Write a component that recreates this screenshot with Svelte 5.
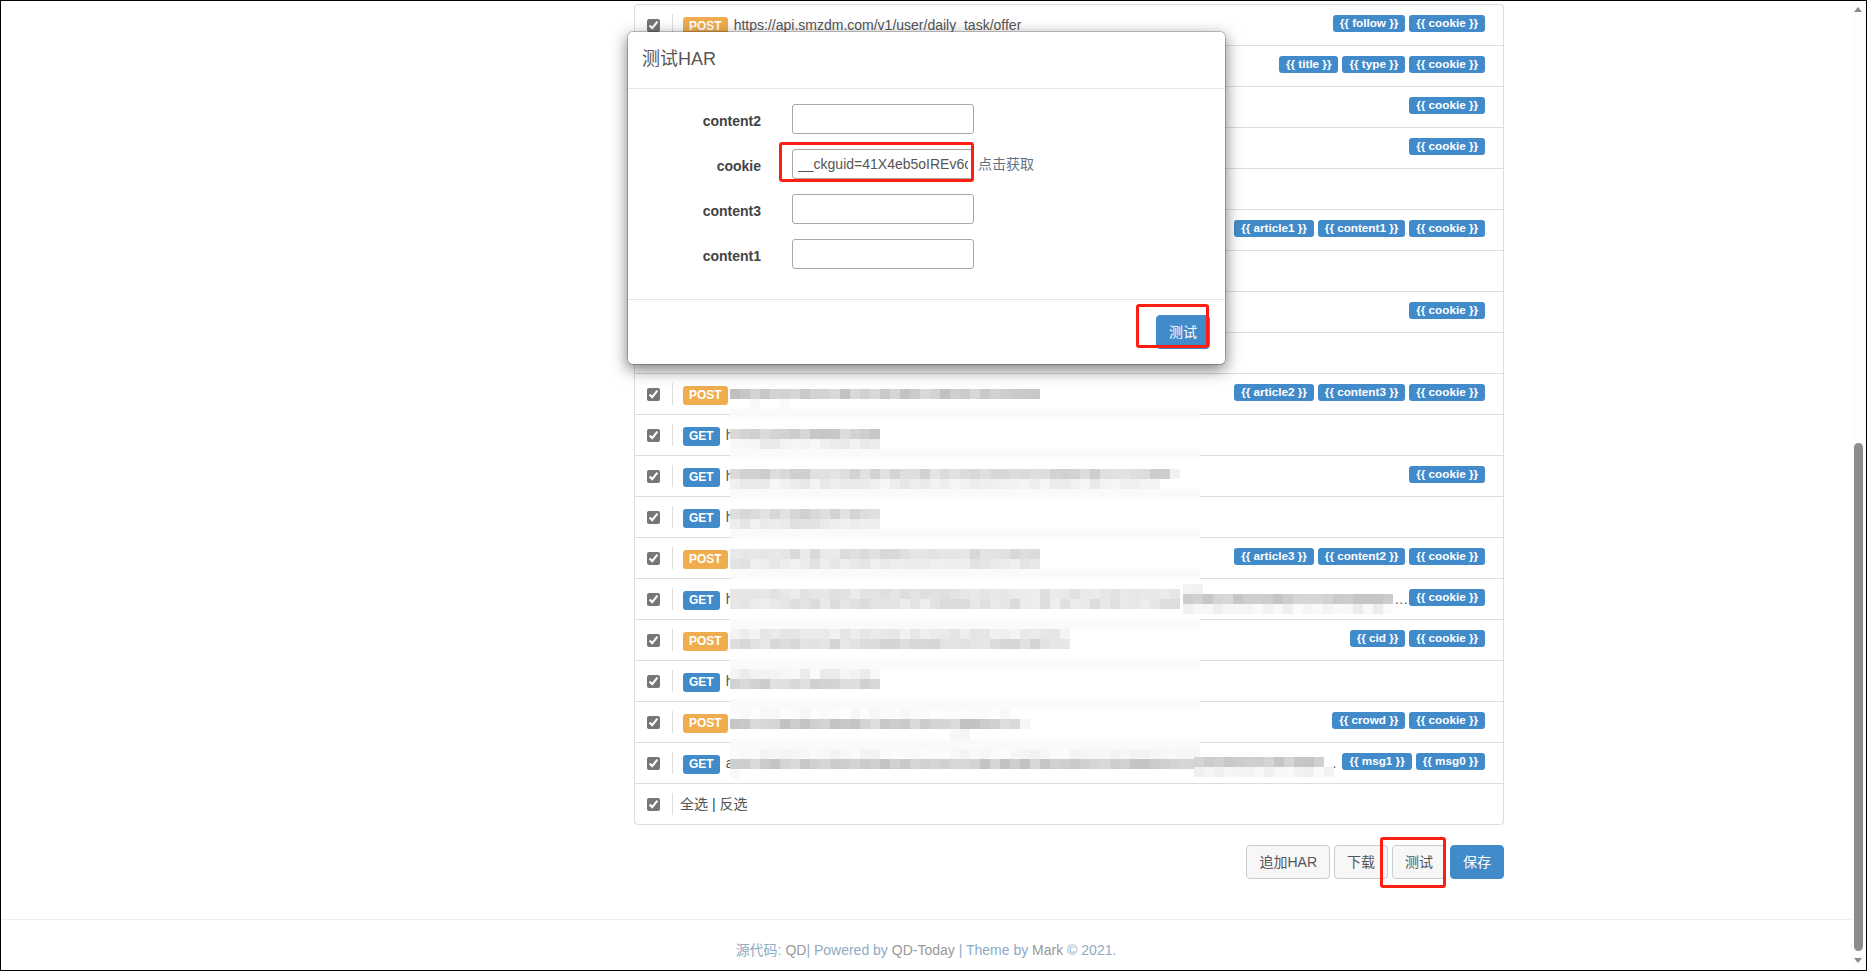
<script>
  const rows = [
    { method: 'POST', url: 'https://api.smzdm.com/v1/user/daily_task/offer', tags: ['follow', 'cookie'] },
    { method: 'POST', url: '', tags: ['title', 'type', 'cookie'] },
    { method: 'GET', url: '', tags: ['cookie'] },
    { method: 'GET', url: '', tags: ['cookie'] },
    { method: 'GET', url: '', tags: [] },
    { method: 'POST', url: '', tags: ['article1', 'content1', 'cookie'] },
    { method: 'GET', url: '', tags: [] },
    { method: 'GET', url: '', tags: ['cookie'] },
    { method: 'GET', url: '', tags: [] },
    { method: 'POST', url: '', tags: ['article2', 'content3', 'cookie'] },
    { method: 'GET', url: 'h', tags: [] },
    { method: 'GET', url: 'h', tags: ['cookie'] },
    { method: 'GET', url: 'h', tags: [] },
    { method: 'POST', url: '', tags: ['article3', 'content2', 'cookie'] },
    { method: 'GET', url: 'h', trail: '…', tags: ['cookie'] },
    { method: 'POST', url: '', tags: ['cid', 'cookie'] },
    { method: 'GET', url: 'h', tags: [] },
    { method: 'POST', url: '', tags: ['crowd', 'cookie'] },
    { method: 'GET', url: 'a', trail: '.', tags: ['msg1', 'msg0'] }
  ];

  const fields = [
    { name: 'content2', value: '' },
    { name: 'cookie', value: '__ckguid=41X4eb5oIREv6c', fetch: true },
    { name: 'content3', value: '' },
    { name: 'content1', value: '' }
  ];

  // blurred out urls: [x, y, width, mean grey, spread]
  const strips = [
    [730, 389, 310, 205, 14],
    [750, 399, 10, 248, 2],
    [780, 399, 10, 248, 2],
    [730, 429, 150, 208, 12],
    [730, 439, 150, 241, 8],
    [730, 469, 440, 216, 12],
    [1170, 469, 10, 244, 2],
    [730, 479, 430, 238, 8],
    [730, 509, 150, 218, 10],
    [730, 519, 150, 232, 10],
    [730, 549, 310, 225, 10],
    [730, 559, 310, 233, 8],
    [730, 589, 450, 229, 8],
    [730, 599, 450, 228, 10],
    [1183, 584, 20, 242, 2],
    [1183, 594, 210, 206, 10],
    [1183, 604, 210, 244, 8],
    [730, 629, 340, 236, 8],
    [730, 639, 340, 222, 10],
    [730, 669, 150, 242, 8],
    [730, 679, 150, 214, 12],
    [730, 709, 280, 250, 4],
    [730, 719, 290, 208, 14],
    [1020, 719, 10, 246, 2],
    [950, 729, 20, 246, 2],
    [730, 749, 470, 247, 5],
    [730, 759, 470, 206, 12],
    [730, 769, 10, 248, 2],
    [1194, 757, 130, 204, 10],
    [1194, 767, 136, 245, 5]
  ];

  const bands = [409, 449, 489, 529, 569, 619, 659, 699, 739];

  let seed = 7;
  function rand() {
    seed = (seed * 16807) % 2147483647;
    return seed / 2147483647;
  }

  const tiles = [];
  for (const [x, y, width, mean, spread] of strips) {
    for (let i = 0; i < width; i += 10) {
      const g = Math.min(255, Math.round(mean + (rand() - 0.5) * 2 * spread));
      const tint = Math.round((rand() - 0.5) * 5);
      tiles.push({ x: x + i, y, fill: `rgb(${g + tint},${g},${g - tint})` });
    }
  }
</script>

<div class="page">
  <div class="main">
    <div class="content">
      <div class="list">
        {#each rows as row}
          <div class="row">
            <input type="checkbox" checked />
            <span class="divider"></span>
            <span class="method {row.method.toLowerCase()}">{row.method}</span>
            <span class="url">{row.url}</span>
            {#if row.trail}
              <span class="trail" class:dot={row.trail === '.'}>{row.trail}</span>
            {/if}
            {#if row.tags.length}
              <div class="tags">
                {#each row.tags as tag}
                  <span class="tag">{`{{ ${tag} }}`}</span>
                {/each}
              </div>
            {/if}
          </div>
        {/each}
        <div class="row last">
          <input type="checkbox" checked />
          <span class="divider"></span>
          <span class="select-links">全选 <b>|</b> 反选</span>
        </div>
      </div>

      <div class="actions">
        <button class="btn">追加HAR</button>
        <button class="btn">下载</button>
        <button class="btn">测试</button>
        <button class="btn primary">保存</button>
      </div>
    </div>

    <footer>
      <span class="blue">源代码:</span> QD<span class="blue">| Powered by</span> QD-Today <span class="blue">| Theme by</span> Mark <span class="blue">© 2021.</span>
    </footer>
  </div>

  <div class="scrollbar">
    <span class="arrow up"></span>
    <span class="thumb"></span>
    <span class="arrow down"></span>
  </div>

  <svg class="mosaic" width="1867" height="971" aria-hidden="true">
    {#each bands as y}
      <rect x="730" {y} width="470" height="10" fill="#fafafa" />
    {/each}
    {#each tiles as t}
      <rect x={t.x} y={t.y} width="10" height="10" fill={t.fill} />
    {/each}
  </svg>

  <div class="modal">
    <div class="modal-head">测试HAR</div>
    <div class="modal-body">
      {#each fields as field}
        <div class="field">
          <label for={field.name}>{field.name}</label>
          <input id={field.name} type="text" value={field.value} />
          {#if field.fetch}
            <span class="fetch">点击获取</span>
          {/if}
        </div>
      {/each}
    </div>
    <div class="modal-foot">
      <button class="btn primary">测试</button>
    </div>
  </div>

  <span class="mark mark-input"></span>
  <span class="mark mark-run"></span>
  <span class="mark mark-test"></span>
</div>

<style>
  :global(body) {
    margin: 0;
    background: #fff;
  }
  .page {
    position: relative;
    display: flex;
    box-sizing: border-box;
    height: 971px;
    overflow: hidden;
    border: 1px solid #000;
    font-family: "Liberation Sans", "Noto Sans CJK SC", sans-serif;
    font-size: 14px;
    color: #555;
  }
  .main {
    flex: 1;
    min-width: 0;
  }
  .content {
    width: 870px;
    margin-left: 633px;
    padding-top: 3px;
  }
  .list {
    border: 1px solid #ddd;
    border-bottom: 0;
    border-radius: 4px 4px 4px 4px;
  }
  .row {
    display: flex;
    align-items: center;
    box-sizing: border-box;
    height: 41px;
    padding: 0 18px 0 12px;
    border-bottom: 1px solid #ddd;
  }
  .row.last {
    border-radius: 0 0 4px 4px;
  }
  .row input {
    width: 13px;
    height: 13px;
    margin: 0;
    accent-color: #767676;
  }
  .divider {
    width: 1px;
    height: 22px;
    margin: 0 10px 0 12px;
    background: #ddd;
  }
  .method {
    margin-top: 3px;
    padding: 3px 6px 4px;
    border-radius: 3px;
    font-size: 12px;
    font-weight: bold;
    line-height: 12px;
    color: #fff;
  }
  .get {
    background: #428bca;
  }
  .post {
    background: #f0ad4e;
  }
  .url {
    margin-left: 6px;
    white-space: nowrap;
  }
  .trail {
    margin-left: auto;
    margin-right: 1px;
  }
  .trail.dot {
    margin-right: 6px;
  }
  .tags {
    display: flex;
    gap: 4px;
    margin-left: auto;
    margin-bottom: 3px;
  }
  .trail + .tags {
    margin-left: 0;
  }
  .tag {
    padding: 0.2em 0.6em 0.3em;
    border-radius: 3px;
    background: #428bca;
    font-size: 11.7px;
    font-weight: bold;
    line-height: 1;
    color: #fff;
    white-space: nowrap;
  }
  .select-links {
    margin-left: -3px;
    margin-top: -2px;
  }
  .select-links b {
    font-weight: normal;
    color: #2a4a6b;
  }
  .actions {
    display: flex;
    justify-content: flex-end;
    gap: 4px;
    margin-top: 20px;
  }
  .btn {
    height: 34px;
    padding: 5px 12px 7px;
    border: 1px solid #ccc;
    border-radius: 4px;
    background: #f7f7f7;
    font: inherit;
    color: #555;
  }
  .btn.primary {
    border-color: #428bca;
    background: #428bca;
    color: #fff;
  }
  footer {
    margin-top: 40px;
    padding-top: 20px;
    border-top: 1px solid #eee;
    font-size: 14px;
    line-height: 20px;
    text-align: center;
    color: #999;
  }
  .blue {
    color: #8eaac4;
  }
  .scrollbar {
    position: relative;
    width: 15px;
    background: #fdfdfd;
  }
  .thumb {
    position: absolute;
    top: 442px;
    left: 3px;
    width: 9px;
    height: 508px;
    border-radius: 5px;
    background: #8c8c8c;
  }
  .arrow {
    position: absolute;
    left: 3px;
    border-left: 4.5px solid transparent;
    border-right: 4.5px solid transparent;
  }
  .arrow.up {
    top: 6px;
    border-bottom: 5px solid #8c8c8c;
  }
  .arrow.down {
    top: 957px;
    border-top: 5px solid #8c8c8c;
  }
  .mosaic {
    position: absolute;
    top: -1px;
    left: -1px;
    pointer-events: none;
  }
  .modal {
    position: absolute;
    top: 30px;
    left: 626px;
    box-sizing: border-box;
    width: 599px;
    border: 1px solid rgba(0, 0, 0, 0.2);
    border-radius: 6px;
    background: #fff;
    background-clip: padding-box;
    box-shadow: 0 5px 15px rgba(0, 0, 0, 0.5);
  }
  .modal-head {
    padding: 15px 14px 16px;
    border-bottom: 1px solid #e5e5e5;
    font-size: 18px;
    line-height: 25px;
  }
  .modal-body {
    display: flex;
    flex-direction: column;
    gap: 15px;
    padding: 15px 15px 30px;
  }
  .field {
    display: flex;
    align-items: center;
    height: 30px;
  }
  .field label {
    width: 118px;
    margin-top: 4px;
    font-weight: bold;
    color: #444;
    text-align: right;
  }
  .field input {
    box-sizing: border-box;
    width: 182px;
    height: 30px;
    margin-left: 31px;
    padding: 5px;
    border: 1px solid #a8a8a8;
    border-radius: 3px;
    outline: 0;
    font: inherit;
    color: #555;
  }
  .fetch {
    margin-left: 4px;
    margin-top: -3px;
    color: #5f7288;
  }
  .modal-foot {
    display: flex;
    justify-content: flex-end;
    padding: 15px;
    border-top: 1px solid #e5e5e5;
  }
  .mark {
    position: absolute;
    box-sizing: border-box;
    border: 3px solid #ff1f12;
    border-radius: 3px;
    pointer-events: none;
  }
  .mark-input {
    top: 141px;
    left: 778px;
    width: 195px;
    height: 40px;
  }
  .mark-run {
    top: 303px;
    left: 1135px;
    width: 73px;
    height: 44px;
  }
  .mark-test {
    top: 836px;
    left: 1379px;
    width: 66px;
    height: 51px;
  }
</style>
